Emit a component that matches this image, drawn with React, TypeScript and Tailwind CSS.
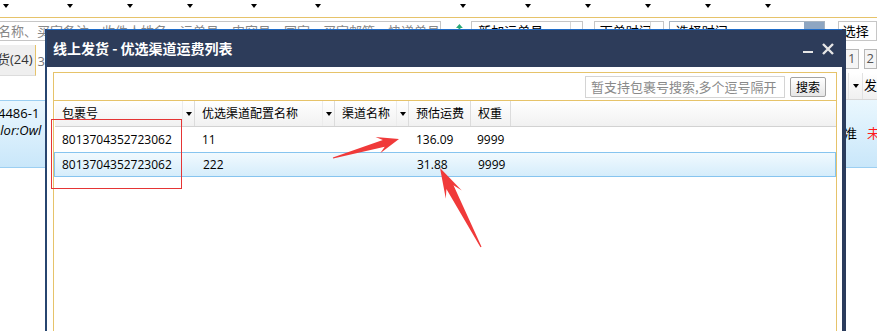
import React from "react";

function Tri({ className = "" }: { className?: string }) {
  return (
    <span
      className={
        "block w-0 h-0 border-l-[3px] border-r-[3px] border-t-[4px] border-l-transparent border-r-transparent border-t-black " +
        className
      }
    />
  );
}

function Arrow({
  x1,
  y1,
  x2,
  y2,
  h,
  hw,
  w1,
}: {
  x1: number;
  y1: number;
  x2: number;
  y2: number;
  h: number;
  hw: number;
  w1: number;
}) {
  const dx = x2 - x1;
  const dy = y2 - y1;
  const L = Math.hypot(dx, dy);
  const ux = dx / L;
  const uy = dy / L;
  const nx = -uy;
  const ny = ux;
  const p = (d: number, s: number) =>
    `${(x1 + ux * d + nx * s).toFixed(2)},${(y1 + uy * d + ny * s).toFixed(2)}`;
  const pts = [
    p(0, 0.6),
    p(L - h * 0.72, w1),
    p(L - h, hw),
    p(L, 0),
    p(L - h, -hw),
    p(L - h * 0.72, -w1),
    p(0, -0.6),
  ];
  return <polygon points={pts.join(" ")} fill="#f03a3a" />;
}

function HeadCell({
  w,
  label,
  arrow,
}: {
  w: string;
  label: string;
  arrow?: boolean;
}) {
  return (
    <div className={"relative h-full flex items-center pl-[7px] border-r border-[#dcdcdc] " + w}>
      <span>{label}</span>
      {arrow && (
        <div className="absolute right-0 top-0 bottom-0 w-[12px] border-l border-[#ececec] flex items-center justify-center">
          <Tri />
        </div>
      )}
    </div>
  );
}

export default function App() {
  return (
    <div className="relative w-[877px] h-[331px] overflow-hidden bg-white text-black font-['Open_Sans','Noto_Sans_CJK_SC',sans-serif]">
      {/* background page */}
      <div className="flex flex-col w-full h-full">
        <div className="h-[18px] border-b border-[#e6c36a] flex items-start pt-[4px] shrink-0">
          <Tri className="ml-[3px]" />
          <Tri className="ml-[58px]" />
          <Tri className="ml-[54px]" />
          <Tri className="ml-[54px]" />
          <Tri className="ml-[58px]" />
          <Tri className="ml-[58px]" />
          <Tri className="ml-[139px]" />
          <Tri className="ml-[59px]" />
          <Tri className="ml-[54px]" />
          <Tri className="ml-[54px]" />
          <Tri className="ml-[54px]" />
          <Tri className="ml-[54px]" />
        </div>
        <div className="h-[26px] flex items-start pt-[3px] shrink-0 text-[13px] whitespace-nowrap">
          <div className="-ml-[3px] w-[454px] h-[20px] border border-[#c6c6c6] text-[#888] leading-[18px] overflow-hidden pl-0">
            名称、买家备注、收件人姓名、运单号、内容号、国家、买家邮箱、快递单号
          </div>
          <svg className="ml-[15px] mt-[3px]" width="7" height="8" viewBox="0 0 7 8">
            <path d="M3.5 0 L7 4 L4.5 4 L4.5 8 L2.5 8 L2.5 4 L0 4 Z" fill="#2aa878" />
          </svg>
          <div className="ml-[8px] w-[114px] h-[20px] border border-[#c6c6c6] flex">
            <span className="flex-1 pl-[6px] leading-[18px]">新加运单号</span>
            <span className="w-[12px] border-l border-[#d6d6d6]" />
          </div>
          <div className="ml-[11px] w-[70px] h-[20px] border border-[#c6c6c6] flex">
            <span className="flex-1 pl-[5px] leading-[18px] overflow-hidden">下单时间</span>
            <span className="w-[13px] border-l border-[#d6d6d6]" />
          </div>
          <div className="ml-[5px] w-[159px] h-[20px] border border-[#a8b4c0] flex">
            <span className="flex-1 pl-[6px] leading-[18px]">选择时间</span>
            <span className="w-[20px] bg-[#8ea6c2]" />
          </div>
          <span className="ml-[5px] leading-[20px]">-</span>
          <div className="ml-[4px] w-[40px] h-[20px] border border-[#c6c6c6] pl-[4px] leading-[18px]">
            选择
          </div>
        </div>
        <div className="flex flex-1 text-[13px] whitespace-nowrap">
          <div className="w-[45px] shrink-0 flex flex-col overflow-hidden">
            <div className="flex items-start mt-[1px]">
              <div className="w-[40px] h-[31px] bg-[#efefef] border-r border-b border-r-[#e6c36a] border-b-[#dcdcdc] flex items-center -ml-[1px] text-[#333] overflow-hidden">
                <span className="-ml-[2px]">货(24)</span>
              </div>
              <span className="ml-[2px] mt-[7px] text-[#777]">3</span>
            </div>
            <div className="mt-[24px] h-[68px] bg-gradient-to-b from-[#eaf7fe] to-[#c9e7fa] border-t border-b border-[#9ccff2] pt-[4px] leading-[17px]">
              <div className="-ml-[2px]">4486-1</div>
              <div className="-ml-[7px] italic">olor:Owl</div>
            </div>
          </div>
          <div className="flex-1" />
          <div className="w-[31px] shrink-0 flex flex-col overflow-hidden">
            <div className="mt-[5px] flex h-[20px] text-[#555]">
              <div className="-ml-[1px] w-[15px] h-[20px] border border-[#b8b8b8] bg-[#f5f5f5] flex items-center justify-center">
                1
              </div>
              <div className="ml-[5px] w-[15px] h-[20px] border border-[#b8b8b8] bg-[#f5f5f5] flex items-center justify-center">
                2
              </div>
            </div>
            <div className="mt-[4px] h-[27px] bg-gradient-to-b from-white to-[#f0f0f0] border-b border-[#d8d8d8] flex items-center">
              <div className="w-[5px] h-full border-r border-[#e2e2e2]" />
              <Tri className="ml-[4px]" />
              <div className="ml-[3px] w-px h-full bg-[#e2e2e2]" />
              <span className="ml-[2px]">发</span>
            </div>
            <div className="h-[68px] bg-gradient-to-b from-[#eaf7fe] to-[#c9e7fa] border-b border-[#9ccff2] flex items-center">
              <span className="-ml-[2px]">准</span>
              <span className="ml-[10px] text-[#ff1a1a]">未</span>
            </div>
          </div>
        </div>
      </div>

      {/* modal */}
      <div className="absolute left-[45px] top-[29px] w-[801px] h-[310px] flex flex-col bg-white border-l-2 border-r-4 border-l-[#27456f] border-r-[#2b3c5c]">
        <div className="h-[38px] shrink-0 bg-[#2d3c5a] border-t border-[#1f6cc8] flex items-center pl-[6px] pr-[8px]">
          <span className="text-white font-bold text-[14px] font-['Noto_Sans_CJK_SC',sans-serif]">
            线上发货 - 优选渠道运费列表
          </span>
          <div className="ml-auto flex items-center">
            <span className="block w-[10px] h-[2px] bg-[#e6e6e6] mt-[6px]" />
            <svg className="ml-[9px]" width="12" height="12" viewBox="0 0 12 12">
              <path d="M1 1 L11 11 M11 1 L1 11" stroke="#e6e6e6" strokeWidth="2.4" />
            </svg>
          </div>
        </div>
        <div className="flex-1 pt-[5px] pl-[6px] pr-[5px] flex flex-col">
          <div className="flex-1 border border-[#e6c36a] flex flex-col">
            <div className="h-[28px] shrink-0 border-b border-[#e6c36a] flex items-center justify-end pr-[10px]">
              <div className="w-[200px] h-[22px] border border-[#d4d4d4] flex items-center pl-[5px] text-[13px] text-[#8a8a8a] font-['Noto_Sans_CJK_SC',sans-serif] whitespace-nowrap overflow-hidden">
                暂支持包裹号搜索,多个逗号隔开
              </div>
              <div className="ml-[5px] w-[36px] h-[20px] border border-[#a2a2a2] rounded-[2px] bg-gradient-to-b from-white to-[#e6e6e6] flex items-center justify-center text-[12px] text-black font-['Noto_Sans_CJK_SC',sans-serif]">
                搜索
              </div>
            </div>
            <div className="pl-[1px] text-[12px] flex flex-col">
              <div className="h-[26px] flex bg-gradient-to-b from-white to-[#f1f1f1] border-b border-[#d2d2d2]">
                <HeadCell w="w-[140px]" label="包裹号" arrow />
                <HeadCell w="w-[140px]" label="优选渠道配置名称" arrow />
                <HeadCell w="w-[74px]" label="渠道名称" arrow />
                <HeadCell w="w-[62px]" label="预估运费" />
                <HeadCell w="w-[40px]" label="权重" />
              </div>
              <div className="h-[25px] flex items-center">
                <div className="w-[140px] pl-[7px]">8013704352723062</div>
                <div className="w-[140px] pl-[7px]">11</div>
                <div className="w-[74px] pl-[7px]"></div>
                <div className="w-[62px] pl-[7px]">136.09</div>
                <div className="w-[40px] pl-[6px]">9999</div>
              </div>
              <div className="h-[25px] flex items-center bg-gradient-to-b from-[#f1f9fe] to-[#d5edfb] border border-[#86c4ef] -ml-px">
                <div className="w-[141px] pl-[7px]">8013704352723062</div>
                <div className="w-[140px] pl-[7px]">222</div>
                <div className="w-[74px] pl-[7px]"></div>
                <div className="w-[62px] pl-[7px]">31.88</div>
                <div className="w-[40px] pl-[6px]">9999</div>
              </div>
            </div>
          </div>
        </div>
      </div>

      {/* annotations */}
      <div className="absolute left-[51px] top-[119px] w-[131px] h-[70px] border border-[#e53535] pointer-events-none" />
      <svg className="absolute left-0 top-0 pointer-events-none" width="877" height="331" viewBox="0 0 877 331">
        <Arrow x1={333} y1={158} x2={399} y2={139} h={22} hw={8.5} w1={3.5} />
        <Arrow x1={481} y1={247} x2={440} y2={168} h={30} hw={9} w1={4} />
      </svg>
    </div>
  );
}
